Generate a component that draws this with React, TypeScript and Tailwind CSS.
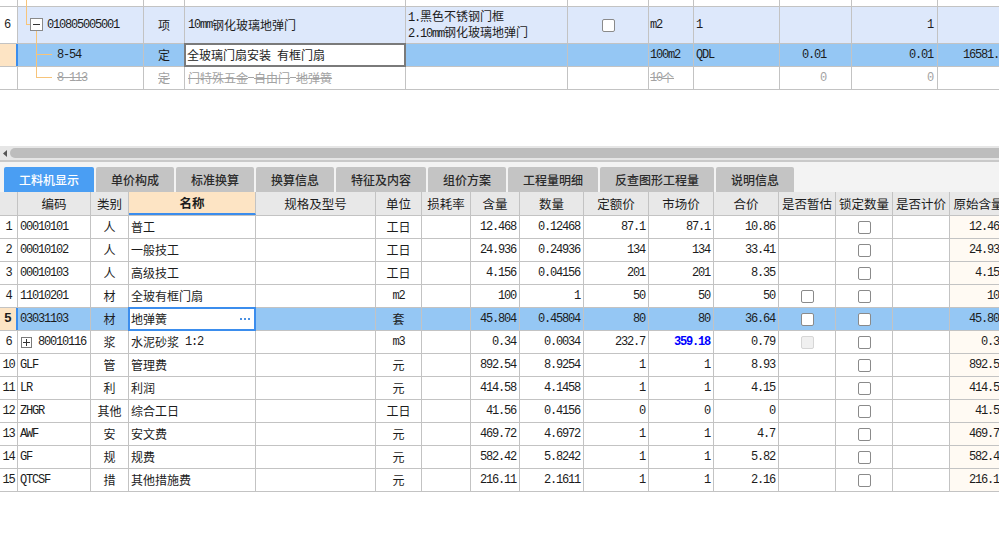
import React from "react";

const MONO = "font-['Liberation_Mono',monospace] text-[12px] tracking-[-1.2px] whitespace-pre";
const GRID = "border-[#c3c3c3]";
const TREE = "bg-[#f7c47a]";

function T({ s }: { s: string }) {
  const parts = s.split(/([\x20-\x7E]+)/).filter((p) => p.length > 0);
  return (
    <>
      {parts.map((p, i) =>
        /^[\x20-\x7E]+$/.test(p) ? (
          <span key={i} className={MONO}>
            {p}
          </span>
        ) : (
          <span key={i}>{p}</span>
        )
      )}
    </>
  );
}

function CB({ disabled = false }: { disabled?: boolean }) {
  return (
    <div
      className={
        disabled
          ? "w-[13px] h-[13px] rounded-[2px] border border-[#d6d6d6] bg-[#f0f0f0]"
          : "w-[13px] h-[13px] rounded-[2px] border border-[#8a8a8a] bg-white"
      }
    />
  );
}

const TOPW = [18, 126, 41, 221, 162, 81, 45, 86, 72, 86, 100];

function TopTable() {
  return (
    <div className="relative w-[999px] overflow-hidden">
      {/* partial row */}
      <div className={`flex h-[7px] border-b ${GRID}`}>
        {TOPW.map((w, i) => (
          <div key={i} style={{ width: w }} className={`shrink-0 border-r ${GRID}`} />
        ))}
      </div>
      {/* row 6 */}
      <div className={`flex h-[37px] border-b ${GRID}`}>
        <div className={`w-[18px] shrink-0 border-r ${GRID} bg-white flex items-center pl-[4px]`}>
          <T s="6" />
        </div>
        <div className={`w-[126px] shrink-0 border-r ${GRID} bg-[#dde8fb] flex items-center pl-[29px]`}>
          <T s="010805005001" />
        </div>
        <div className={`w-[41px] shrink-0 border-r ${GRID} bg-[#dde8fb] flex items-center justify-center`}>项</div>
        <div className={`w-[221px] shrink-0 border-r ${GRID} bg-[#dde8fb] flex items-center pl-[3px]`}>
          <T s="10mm钢化玻璃地弹门" />
        </div>
        <div className={`w-[162px] shrink-0 border-r ${GRID} bg-[#dde8fb] flex flex-col justify-center pl-[2px] leading-[13px]`}>
          <div>
            <T s="1.黑色不锈钢门框" />
          </div>
          <div>
            <T s="2.10mm钢化玻璃地弹门" />
          </div>
        </div>
        <div className={`w-[81px] shrink-0 border-r ${GRID} bg-[#dde8fb] flex items-center justify-center`}>
          <CB />
        </div>
        <div className={`w-[45px] shrink-0 border-r ${GRID} bg-[#dde8fb] flex items-center pl-[1px]`}>
          <T s="m2" />
        </div>
        <div className={`w-[86px] shrink-0 border-r ${GRID} bg-[#dde8fb] flex items-center pl-[2px]`}>
          <T s="1" />
        </div>
        <div className={`w-[72px] shrink-0 border-r ${GRID} bg-[#dde8fb]`} />
        <div className={`w-[86px] shrink-0 border-r ${GRID} bg-[#dde8fb] flex items-center justify-end pr-[4px]`}>
          <T s="1" />
        </div>
        <div className="w-[100px] shrink-0 bg-[#dde8fb]" />
      </div>
      {/* row 8-54 */}
      <div className={`relative flex h-[23px] border-b ${GRID} bg-[#95c7f4]`}>
        <div className="w-[18px] shrink-0 border-r-2 border-[#3b8ded] bg-[#fde4c4]" />
        <div className={`w-[126px] shrink-0 border-r ${GRID} flex items-center pl-[39px]`}>
          <T s="8-54" />
        </div>
        <div className={`w-[41px] shrink-0 border-r ${GRID} flex items-center justify-center`}>定</div>
        <div className={`w-[221px] shrink-0 border-r ${GRID}`} />
        <div className={`w-[162px] shrink-0 border-r ${GRID}`} />
        <div className={`w-[81px] shrink-0 border-r ${GRID}`} />
        <div className={`w-[45px] shrink-0 border-r ${GRID} flex items-center pl-[1px]`}>
          <T s="100m2" />
        </div>
        <div className={`w-[86px] shrink-0 border-r ${GRID} flex items-center pl-[2px]`}>
          <T s="QDL" />
        </div>
        <div className={`w-[72px] shrink-0 border-r ${GRID} flex items-center justify-end pr-[25px]`}>
          <T s="0.01" />
        </div>
        <div className={`w-[86px] shrink-0 border-r ${GRID} flex items-center justify-end pr-[4px]`}>
          <T s="0.01" />
        </div>
        <div className="w-[100px] shrink-0 flex items-center pl-[25px]">
          <T s="16581.05" />
        </div>
        <div className="absolute left-[184px] top-[-1px] w-[222px] h-[24px] border-2 border-[#7a7a7a] bg-white flex items-center pl-[1px] text-[12px]">
          <T s="全玻璃门扇安装 有框门扇" />
        </div>
      </div>
      {/* row 8-113 */}
      <div className={`flex h-[23px] border-b ${GRID} text-[#a3a3a3]`}>
        <div className={`w-[18px] shrink-0 border-r ${GRID}`} />
        <div className={`w-[126px] shrink-0 border-r ${GRID} flex items-center pl-[39px] line-through`}>
          <T s="8-113" />
        </div>
        <div className={`w-[41px] shrink-0 border-r ${GRID} flex items-center justify-center line-through`}>定</div>
        <div className={`w-[221px] shrink-0 border-r ${GRID} flex items-center pl-[3px] line-through`}>
          <T s="门特殊五金 自由门 地弹簧" />
        </div>
        <div className={`w-[162px] shrink-0 border-r ${GRID}`} />
        <div className={`w-[81px] shrink-0 border-r ${GRID}`} />
        <div className={`w-[45px] shrink-0 border-r ${GRID} flex items-center pl-[1px] line-through`}>
          <T s="10个" />
        </div>
        <div className={`w-[86px] shrink-0 border-r ${GRID}`} />
        <div className={`w-[72px] shrink-0 border-r ${GRID} flex items-center justify-end pr-[25px]`}>
          <T s="0" />
        </div>
        <div className={`w-[86px] shrink-0 border-r ${GRID} flex items-center justify-end pr-[4px]`}>
          <T s="0" />
        </div>
        <div className="w-[100px] shrink-0" />
      </div>

      {/* tree connectors */}
      <div className={`absolute left-[26px] top-0 w-px h-[25px] ${TREE}`} />
      <div className={`absolute left-[26px] top-[24px] w-[4px] h-px ${TREE}`} />
      <div className="absolute left-[30px] top-[18px] w-[13px] h-[13px] border border-[#8a8a8a] bg-white flex items-center justify-center">
        <div className="w-[7px] h-px bg-[#333]" />
      </div>
      <div className={`absolute left-[36px] top-[31px] w-px h-[47px] ${TREE}`} />
      <div className={`absolute left-[36px] top-[54px] w-[16px] h-px ${TREE}`} />
      <div className={`absolute left-[36px] top-[77px] w-[16px] h-px ${TREE}`} />
    </div>
  );
}

const TABS: [string, number][] = [
  ["工料机显示", 90],
  ["单价构成", 78],
  ["标准换算", 78],
  ["换算信息", 78],
  ["特征及内容", 90],
  ["组价方案", 78],
  ["工程量明细", 90],
  ["反查图形工程量", 114],
  ["说明信息", 78],
];

function Tabs() {
  return (
    <div className="h-[30px] bg-[#f3f3f3] flex items-end gap-[2px] pl-[4px]">
      {TABS.map(([t, w], i) => (
        <div
          key={t}
          style={{ width: w }}
          className={
            i === 0
              ? "h-[25px] shrink-0 rounded-t-[2px] bg-[#4a9ef3] text-white flex items-center justify-center text-[12px] font-medium"
              : "h-[25px] shrink-0 rounded-t-[2px] bg-[#c4c4c4] text-[#2a2a2a] flex items-center justify-center text-[12px] font-medium"
          }
        >
          {t}
        </div>
      ))}
    </div>
  );
}

const BW = [18, 73, 38, 127, 120, 46, 49, 49, 64, 65, 65, 65, 57, 57, 57, 58];
const HEAD = ["", "编码", "类别", "名称", "规格及型号", "单位", "损耗率", "含量", "数量", "定额价", "市场价", "合价", "是否暂估", "锁定数量", "是否计价", "原始含量"];

type Row = {
  n: string;
  code: string;
  cat: string;
  name: string;
  unit: string;
  v: string[];
  est: "none" | "cb" | "dis";
  orig: string;
  sel?: boolean;
  plus?: boolean;
  blue?: boolean;
};

const ROWS: Row[] = [
  { n: "1", code: "00010101", cat: "人", name: "普工", unit: "工日", v: ["12.468", "0.12468", "87.1", "87.1", "10.86"], est: "none", orig: "12.468" },
  { n: "2", code: "00010102", cat: "人", name: "一般技工", unit: "工日", v: ["24.936", "0.24936", "134", "134", "33.41"], est: "none", orig: "24.936" },
  { n: "3", code: "00010103", cat: "人", name: "高级技工", unit: "工日", v: ["4.156", "0.04156", "201", "201", "8.35"], est: "none", orig: "4.156" },
  { n: "4", code: "11010201", cat: "材", name: "全玻有框门扇", unit: "m2", v: ["100", "1", "50", "50", "50"], est: "cb", orig: "100" },
  { n: "5", code: "03031103", cat: "材", name: "地弹簧", unit: "套", v: ["45.804", "0.45804", "80", "80", "36.64"], est: "cb", orig: "45.804", sel: true },
  { n: "6", code: "80010116", cat: "浆", name: "水泥砂浆 1:2", unit: "m3", v: ["0.34", "0.0034", "232.7", "359.18", "0.79"], est: "dis", orig: "0.34", plus: true, blue: true },
  { n: "10", code: "GLF", cat: "管", name: "管理费", unit: "元", v: ["892.54", "8.9254", "1", "1", "8.93"], est: "none", orig: "892.54" },
  { n: "11", code: "LR", cat: "利", name: "利润", unit: "元", v: ["414.58", "4.1458", "1", "1", "4.15"], est: "none", orig: "414.58" },
  { n: "12", code: "ZHGR", cat: "其他", name: "综合工日", unit: "工日", v: ["41.56", "0.4156", "0", "0", "0"], est: "none", orig: "41.56" },
  { n: "13", code: "AWF", cat: "安", name: "安文费", unit: "元", v: ["469.72", "4.6972", "1", "1", "4.7"], est: "none", orig: "469.72" },
  { n: "14", code: "GF", cat: "规", name: "规费", unit: "元", v: ["582.42", "5.8242", "1", "1", "5.82"], est: "none", orig: "582.42" },
  { n: "15", code: "QTCSF", cat: "措", name: "其他措施费", unit: "元", v: ["216.11", "2.1611", "1", "1", "2.16"], est: "none", orig: "216.11" },
];

function BottomTable() {
  return (
    <div className="w-[999px] overflow-hidden">
      <div className={`flex h-[24px] border-b ${GRID} bg-[#e8e8e8] w-[1010px]`}>
        {HEAD.map((h, i) => (
          <div
            key={i}
            style={{ width: BW[i] }}
            className={
              i === 3
                ? `shrink-0 border-r ${GRID} bg-[#fde4c4] font-bold flex items-center justify-center border-b-2 border-b-[#3b8ded] text-[12.5px]`
                : `shrink-0 border-r ${GRID} flex items-center justify-center text-[12.5px]`
            }
          >
            {h}
          </div>
        ))}
      </div>
      {ROWS.map((r) => {
        const bg = r.sel ? "bg-[#95c7f4]" : "bg-white";
        return (
          <div key={r.n} className={`relative flex h-[23px] border-b ${GRID} w-[1010px] ${bg}`}>
            {r.sel ? (
              <div className="w-[18px] shrink-0 border-r-2 border-[#3b8ded] bg-[#fde4c4] flex items-center justify-center font-bold font-['Liberation_Mono',monospace] text-[13px]">
                {r.n}
              </div>
            ) : (
              <div className={`w-[18px] shrink-0 border-r ${GRID} flex items-center justify-center`}>
                <T s={r.n} />
              </div>
            )}
            <div className={`w-[73px] shrink-0 border-r ${GRID} flex items-center pl-[2px]`}>
              {r.plus && (
                <div className="w-[11px] h-[11px] border border-[#7a7a7a] bg-white mr-[6px] ml-[1px] relative flex items-center justify-center">
                  <div className="w-[7px] h-px bg-[#333]" />
                  <div className="absolute w-px h-[7px] bg-[#333]" />
                </div>
              )}
              <T s={r.code} />
            </div>
            <div className={`w-[38px] shrink-0 border-r ${GRID} flex items-center justify-center`}>{r.cat}</div>
            <div className={`w-[127px] shrink-0 border-r ${GRID} flex items-center pl-[2px]`}>
              <T s={r.name} />
            </div>
            <div className={`w-[120px] shrink-0 border-r ${GRID}`} />
            <div className={`w-[46px] shrink-0 border-r ${GRID} flex items-center justify-center`}>
              <T s={r.unit} />
            </div>
            <div className={`w-[49px] shrink-0 border-r ${GRID}`} />
            {r.v.map((x, j) => (
              <div
                key={j}
                style={{ width: BW[7 + j] }}
                className={`shrink-0 border-r ${GRID} flex items-center justify-end pr-[3px]`}
              >
                {r.blue && j === 3 ? (
                  <span className={`${MONO} font-bold text-[#0000ff]`}>{x}</span>
                ) : (
                  <T s={x} />
                )}
              </div>
            ))}
            <div className={`w-[57px] shrink-0 border-r ${GRID} flex items-center justify-center`}>
              {r.est === "cb" && <CB />}
              {r.est === "dis" && <CB disabled />}
            </div>
            <div className={`w-[57px] shrink-0 border-r ${GRID} flex items-center justify-center`}>
              <CB />
            </div>
            <div className={`w-[57px] shrink-0 border-r ${GRID}`} />
            <div className={`w-[58px] shrink-0 flex items-center justify-end pr-[3px] ${r.sel ? "" : "bg-[#fffaf3]"}`}>
              <T s={r.orig} />
            </div>
            {r.sel && (
              <div className="absolute left-[128px] top-[-1px] w-[128px] h-[24px] border-2 border-[#3b8ded] bg-white flex items-center justify-between pl-[1px] pr-[4px]">
                <span>{r.name}</span>
                <div className="flex gap-[2px]">
                  <div className="w-[2px] h-[2px] bg-[#4a90e2]" />
                  <div className="w-[2px] h-[2px] bg-[#4a90e2]" />
                  <div className="w-[2px] h-[2px] bg-[#4a90e2]" />
                </div>
              </div>
            )}
          </div>
        );
      })}
    </div>
  );
}

export default function App() {
  return (
    <div className="w-[999px] h-[538px] overflow-hidden bg-white text-[12px] text-[#1c1c1c] font-['Noto_Sans_CJK_SC',sans-serif] leading-[14px]">
      <TopTable />
      <div className="h-[56px]" />
      <div className="h-[14px] bg-[#e6e6e6] flex items-center">
        <div className="w-[10px] flex items-center justify-center">
          <svg width="5" height="7" viewBox="0 0 5 7">
            <path d="M4 0 L0 3.5 L4 7 Z" fill="#555" />
          </svg>
        </div>
        <div className="flex-1 h-[10px] rounded-l-full bg-[#bdbdbd]" />
      </div>
      <div className="h-[2px] bg-[#c9c9c9]" />
      <Tabs />
      <BottomTable />
    </div>
  );
}
